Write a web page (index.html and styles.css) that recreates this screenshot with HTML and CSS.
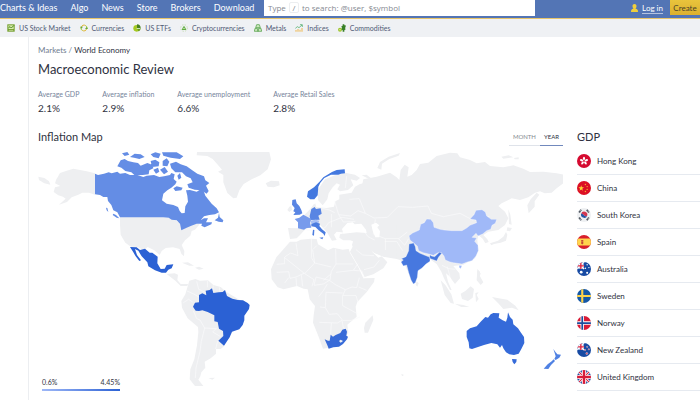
FILE: index.html
```html
<!DOCTYPE html>
<html lang="en">
<head>
<meta charset="utf-8">
<title>Macroeconomic Review</title>
<link rel="stylesheet" href="styles.css">
</head>
<body>
<header class="topbar">
  <nav class="mainnav">
    <a href="#">Charts &amp; Ideas</a><a href="#">Algo</a><a href="#">News</a><a href="#">Store</a><a href="#">Brokers</a><a href="#">Download</a>
  </nav>
  <div class="search">
    <input id="search" type="text">
    <label for="search">Type <kbd>/</kbd> to search: @user, $symbol</label>
  </div>
  <div class="account">
    <a class="login" href="#"><svg viewBox="0 0 14 16"><path fill="#f0cf3c" d="M7 0c3 0 4 2 4 4.500S9 9 9 9.500c4 .5 5 2 5 6.500H0c0-4.500 1-6 5-6.500C5 9 3 7 3 4.500S4 0 7 0z"/></svg><span>Log in</span></a>
    <button class="create" type="button">Create</button>
  </div>
</header>
<nav class="subnav">
  <a href="#"><svg viewBox="0 0 24 24"><path fill="#6f9d27" d="M1 1h22v22H1z"/><path fill="#d9ecac" d="M4 4h16v11H4z"/><path fill="none" stroke="#4a8a20" stroke-width="3" d="M4 12l5-4 4 4 8-8"/><path stroke="#e5efc6" stroke-width="2" d="M5 19h14"/></svg>US Stock Market</a>
  <a href="#"><svg viewBox="0 0 24 24"><g fill="none" stroke-width="3"><path stroke="#e2b637" d="M4 10c1-6 8-9 13-5M20 14c-1 6-8 9-13 5"/><path stroke="#a5c923" d="M17 5c4 2 5 6 3 10M7 19c-4-2-5-5-3-9"/></g><path fill="#62a63f" d="M0 8h9l-5 6zM15 15h9l-4-6z"/></svg>Currencies</a>
  <a href="#"><svg viewBox="0 0 24 24"><circle cx="11" cy="13" r="10" fill="#a5c923"/><path fill="#477f20" d="M12 1c7 0 11 5 11 11H12z"/><path fill="#6a9e20" d="M12 12h11c0 6-3 9-7 10z"/><path fill="#fff" d="M11 12h10v2H11z"/></svg>US ETFs</a>
  <a href="#"><svg viewBox="0 0 24 24"><circle cx="12" cy="12" r="10" fill="none" stroke="#b5d596" stroke-width="2" stroke-dasharray="4 4"/><path fill="#5fac3d" d="M12 5l4 6 3 7H5l3-7z"/><path stroke="#e9f4df" stroke-width="2" d="M9 13h6"/></svg>Cryptocurrencies</a>
  <a href="#"><svg viewBox="0 0 24 24"><g fill="#cce8bd" stroke="#45983a" stroke-width="2"><path d="M8 2h8l3 9H5zM3 13h7l2 9H1zM14 13h7l2 9H12z"/></g></svg>Metals</a>
  <a href="#"><svg viewBox="0 0 24 24"><path fill="#efc574" d="M1 18h4v5H1zm6-3h4v8H7zm6 2h4v6h-4zm6-5h4v11h-4z"/><path fill="none" stroke="#3da45b" stroke-width="2" d="M1 13l6-5 5 3 9-8M15 2h7v7"/></svg>Indices</a>
  <a href="#"><svg viewBox="0 0 24 24"><circle cx="6" cy="17" r="6" fill="#9fc52e"/><circle cx="6" cy="17" r="2" fill="#eef3c6"/><path fill="#367f27" d="M14 1h5v3h4v5l-2 3 2 4-4 3v4h-5v-4l-4-3 2-4-2-5 4-2z"/></svg>Commodities</a>
</nav>
<main class="page">
  <div class="crumbs"><a href="#">Markets</a><span>/</span><b>World Economy</b></div>
  <h1>Macroeconomic Review</h1>
  <dl class="stats">
    <div><dt>Average GDP</dt><dd>2.1%</dd></div>
    <div><dt>Average inflation</dt><dd>2.9%</dd></div>
    <div><dt>Average unemployment</dt><dd>6.6%</dd></div>
    <div><dt>Average Retail Sales</dt><dd>2.8%</dd></div>
  </dl>
  <div class="columns">
    <section>
      <div class="head"><h2>Inflation Map</h2>
        <div class="tabs"><button type="button">MONTH</button><button type="button" class="active">YEAR</button></div>
      </div>
      <div class="map">
        <svg viewBox="0 12 1575 720" role="img" aria-label="World inflation map">
          <g class="land">
            <g transform="translate(-24 -69)">
              <path d="M25 155l18 4 14 10 4 10-18-4-16-10zM82 158l8-14 20-7 20-6 40 8 25 6v64l-18-6-20 0-12 6-20 8-14 14-24 8 20-18-8-6-14-4-14-10 4-14 16-4-16-8 4-12z"/>
              <path d="M270 276h130l25 4 25 14 5 20 22-10 22-10 10 4-14 16-10 4-4 14-16 14-10 14 8 18-1 16-8-8-5-14-20-5-22 2-12 9-6 12-16-14-20-10-12 10-18-10-20-1-17-12-14-24-2-30z"/>
              <path d="M456 413l18-1 18 10-14 0zM495 428l12-3 14 6-14 3z"/>
            </g>
            <path d="M477 12h217l5 22-10 30-22 18-26 12-24 14-13 19-8 22-10 2-18-16-12-32 0-22-16-10 12-6-14-16-14-16-16-9-32-2zM683 106l16-8 24 2 2 12-18 6-18-2z"/>
            <g transform="translate(-24 336)">
              <path d="M410 42l24-2 10 4-2 16 10 12 22 0-2 6-20 0-16-16z"/>
              <path d="M478 62l18-5 14 5 24-1 16 14 22 6 16 14 50 30-5 60-50 60-1 14-10 8-14 0 0 14-16 14-18 10 2 18-12 14-3 12-6 10 15 19-25 0-16-20 2-30 12-30 8-42 4-40-1-15-31-26-17-32-2-20 12-20z"/>
              <path d="M535 354l20-1-8 6z"/>
              <path class="seam" d="M500 64l6 24 22 10M471 93l18 8 18 10M460 128l16-10 12 8M490 152l10 24 10 4M510 180l14 24 36 2M524 204l-10 40-4 30-12 50-2 30M558 206l-10 10 24 14M563 243l-6 24M532 62l0 20M550 76l-2 20M568 82l2 16"/>
            </g>
            <!-- Europe -->
            <g transform="translate(546 -24)">
              <path d="M208 200l6-2 2 12-8 6-6-6zM280 196l6-6 2 12-6 4z"/>
              <path d="M294 180L293 150 315 118 345 106 375 98 405 104 420 114 410 122 392 118 400 136 384 150 360 154 352 148 360 134 350 130 338 142 326 160 322 178 308 196z"/>
              <path d="M204 264L236 265 245 262 235 240 250 228 270 208 282 192 290 202 320 204 342 200 346 184 358 178 358 164 395 158 405 140 420 132 438 128 446 116 425 106 440 104 455 116 480 110 520 108 520 300 440 290 380 278 350 275 342 284 350 300 336 302 322 278 302 256 280 258 256 268 240 285 230 295 210 297z"/>
            </g>
            <!-- Russia and Asia -->
            <g transform="translate(996 -24)">
              <path d="M-20 118L20 110 60 98 80 112 88 120 92 90 104 74 116 82 112 110 125 105 140 90 150 72 175 68 200 48 240 38 262 40 270 52 300 60 320 70 345 66 360 78 400 82 430 76 460 86 480 96 520 95 560 100 580 104 580 130 560 145 545 158 524 160 510 154 495 158 475 172 450 180 425 175 395 190 385 198 405 215 415 235 405 255 385 270 355 275 340 285 352 298 356 306 346 310 338 296 325 285 322 300 325 330 315 355 280 374 250 378 268 400 270 415 255 432 246 420 240 410 228 400 234 425 245 450 240 450 222 415 214 395 200 372 180 358 150 378 135 400 130 420 118 405 105 375 90 360 80 357 40 350 15 340 -5 325 -60 300z"/>
              <path d="M500 158l8 6-14 20 0 16-18 20-4-24 10-18z"/>
              <path d="M22 84l8-18 26-16 34-11-4 8-28 10-22 14-2 18zM394 50l22-4 14 6-30 4zM432 54l14-2 0 6-12 0zM415 208l6 16 4 30-8-2zM412 262l14 2-6 10-10-2zM408 276l4 8-4 18-16 6-20 4-8 4-4-6 24-8 16-12zM140 424l6 6-4 10-5-6zM322 392l10 8-4 14-6-6z"/>
            </g>
            <g transform="translate(606 231)">
              <path d="M300 28L330 20 360 20 400 0 470 0 470 100 430 94 400 82 385 68 345 80 336 60 340 46 310 46 298 38z"/>
              <path d="M330 80L345 52 385 64 398 82 415 98 425 94 442 112 430 130 400 148 374 156 352 118z"/>
              <path d="M150 50l20 0 12-6 30-3 18 1 4 16 30 18 16-8 28 6 18-2 4 12 26 44 14 32 34-1-2 12-22 30-28 30-5 14 3 30-28 24 3 24-14 20-16 18-20 6-26 4-14-38-16-40 2-22 4-28-16-20-6-30-12-2-20-8-40 10-18-6-18-24-2-30 16-36z"/>
              <path d="M398 271l2 14-16 38-10 0-2-14 4-16z"/>
              <path class="seam" d="M110 118l24-2 0-20 18-12 22 8-6-38M134 98l60 48 30-32-10-16 0-56M230 62l-12 12 6 40 50 12M287 72l1 45 52 0M288 117l-14 22-4 26-20 12-28 4M288 142l52-6 14-20M110 142l36-2 4 20 18-4 26-12M146 158l-12 16M168 158l2 26M184 150l4 34M194 146l28 18-6 20M222 180l6-24 40 10 20 14 28 14 20-8 14 2 8-30M250 166l24-20M316 194l-8 18 0 30 44 24M308 212l40 0 6 20M236 215l14-18 12-20M240 246l16 2 2-46 50 2M256 248l12 20 24-2 16 20 26 0 26-10M238 292l54 2 14-8M274 294l-2 34M306 286l4 22 14 6M340 136l26 2 6 22M356 186l24 10M372 134l30-8 16-20M348 74l20 16 34 2"/>
            </g>
            <path class="seam" d="M790 220l16 26 32 2 24-10 10-14 40-16 36 6M890 160l12 40 36 4M850 180l24 6 16 8M880 198l0 40M902 200l14 22 36-2M938 204l22-16 22 8M934 154l30-2 18 44 26 14M926 84l-4 36M1008 210l40-2 32-32 44 2 46-4 10 22 36 10 50-10 38 20 30-10 20 0M1012 214l-6 44 36 14 40 0 26-20M1042 272l0 34M1082 272l18 20 12-20M1040 280l36 0 18 28M970 238l20 28 20 10M1212 352l20 10 20 2M1228 356l8 30"/>
            <path fill="#fff" d="M912 243l16-18 16-2 6 6 20-2 14 18 2 10-30-2-20 2-20 2zM1000 230l14-6 10 8-6 6 8 12-2 18-12 0-8-20z"/>
            <g transform="translate(1086 231)">
              <path d="M122 166l14 14 18 28 8 28-10-2-18-24zM164 236l26 4 18 6-24 0zM182 206l14-8 16-14 10 8-4 26-14 10-18-6zM226 204l10-2-6 8 6 12-8 10zM232 132l8 8 0 14 10 18-8 8-12-14zM276 216l20 4 26 4 24 18 10 14-20-8-26 4-14-16z"/>
              <path d="M424 300l4 2M4 446l8 4-6 4z"/>
            </g>
          </g>
          <g transform="translate(-24 -69)">
            <g fill="#648de5">
              <path d="M195 146L204 150 222 146 236 142 245 145 262 140 270 146 286 144 300 150 322 150 340 156 350 152 372 150 388 156 402 154 420 150 424 144 434 148 431 162 440 170 436 178 424 188 412 196 400 206 396 226 410 236 430 240 444 246 449 258 455 265 464 264 466 244 474 230 472 212 468 196 480 195 500 200 510 194 520 195 526 212 545 236 560 250 567 262 555 268 538 270 522 274 512 286 522 280 534 280 528 292 546 292 544 298 524 307 514 302 516 296 500 296 484 302 470 308 454 316 450 296 440 286 425 284 416 278 400 277 270 277 262 262 250 256 244 240 234 228 232 216 220 216 210 210 195 208z"/>
              <path d="M262 124l10-18 12-4 10 6 16 4 14 2 8 8 20-8 16 6 2 10-12 6-2 12-18 2-24 1-10-9-18-4-12-10zM276 85l16-4 6 8-14 4zM300 96l14-10 18 2 12 8-16 6-16-4zM362 88l14-6 16 4-6 14-16-4zM396 82l44 0 20 12-10 8-28-4-22-6zM362 108l14-4 12 8-2 12-20 2zM398 108l12-8 8 10-6 14-14-2zM370 134l14-6 4 12-10 6zM390 134l14-8 10 14-12 8zM300 156l16 0 20 6-10 4-20-4z"/>
              <path d="M420 116l18-6 14 8 18 6 20 14 12 8 20 8 4 12 12 8-10 8 8 16-6 8-16-10-20-2-18-6-4-10 16-6-6-12-14-6-12-12-20 0-12-12zM442 152l8-8 4 14-8 6zM430 190l10-6 18 4-4 8-18 2zM567 264l2 12 11 10-2 6-12-2-12-4 10-8zM250 266l8 4 10 10-8-2-12-8zM228 248l4 1 3 12-5-5z"/>
            </g>
            <path fill="#2b61d4" d="M300 366l20 1 10 8 15-4 14 12 8 0 8 6 8 6-1 20 10 17 12-1 6-11 20-2-5 12-10 4-7 9-13 0-20-7-20-12-3-12-17-18-10-17-10-5 6 18 12 16-5 2-11-14-7-12z"/>
          </g>
          <path transform="translate(-24 336)" fill="#2b61d4" d="M507 105l10-5 12 6-2-14 12-2 7-5 4 14 16-2 12-1 7-6 6 18 16 8 16 4 16 1 14 8 6 6-2 12-14 20 0 14-5 14-10 13-22 7-7 17-8 12-9 13-17-15 15-14-1-15-12-7-4-20-10-2 0-18-20-10-16-5-10 2-10-1-8-12 6-12 12-1z"/>
          <g transform="translate(546 -24)">
            <path fill="#4378df" d="M264 154l18-12 18-18 10-12 26-16 14-6 24-2 1 12-12 1-8 3-12 0-10 0-20 10-12 14-6 12-2 26-10 12-12 0-10-8z"/>
            <path fill="#5985e3" d="M217 180l10-2 3 12 8 8 6 12 3 10-8 4-19 1 6-8-6-3 4-10-8-10zM274 207l10-6 4 6 14-2 3 16-10 6 4 12-28 1-2-12z"/>
            <path fill="#779bec" d="M224 237l14-4 12-9 14 8 10 5-4 12 4 14-14 1-8 5-18-4 0-18z"/>
            <path fill="#a8c0f4" d="M272 242l14-3 12 3-2 6-12 4-10-1z"/>
            <path fill="#4b7cdf" d="M274 252l14-5 12 4-2 7 8 10 11 9-3 11-4-7-14-10-10-10-12-2zM279 269l4 1-1 17-5-2zM298 293l12-1-3 6z"/>
          </g>
          <g transform="translate(996 -24)">
            <path fill="#a0b9f8" stroke="#fff" d="M117 287L128 279 148 270 152 253 163 248 170 237 182 238 190 248 192 262 210 268 222 270 246 272 276 272 290 264 300 256 320 248 318 240 300 237 312 224 318 211 336 209 346 216 350 228 364 238 380 238 376 250 366 256 362 268 350 272 338 282 324 288 318 280 306 292 320 294 314 304 324 316 325 332 318 348 306 362 292 366 276 372 262 370 250 368 240 366 226 360 222 348 214 338 204 338 190 346 176 342 160 338 146 332 142 318 130 308 120 300zM268 376l8 1-4 9-5-4z"/>
            <path fill="#4778df" stroke="#fff" d="M117 312L131 309 136 320 138 332 150 340 180 352 180 364 168 372 156 384 144 392 142 412 136 428 130 432 123 420 116 398 110 375 100 378 93 366 100 360 94 356 108 350 116 332zM180 344l4 4 10 2 14-13 8 2-10 12-6 12-10-4-12-4z"/>
          </g>
          <path transform="translate(606 231)" fill="#386bd8" d="M254 343l10 4 5 0 3-18 7 6 8-5 14-6 6-10 10-3 4 9-2 12 5 3-3 8-12 14-12 8-17 2-14 4-3-8zM302 344l-5 4 5 5 7-5z" fill-rule="evenodd"/>
          <g transform="translate(1086 231)">
            <path fill="#356ad9" d="M200 318L210 310 230 304 242 290 256 276 264 278 272 268 280 264 298 265 296 278 308 286 318 290 322 278 324 262 330 276 338 284 340 298 354 310 362 322 372 336 373 354 364 372 356 386 342 390 328 388 318 382 310 370 306 360 300 368 292 358 274 354 252 360 234 366 216 372 208 370 206 352 200 336z"/>
            <path fill="#356ad9" d="M336 402l14 1-1 8-6 7-5-7z"/>
            <path fill="#4f81e3" d="M460 372l7 10 5 6 11 1-5 9-11 7-4-3 4-8-3-10zM461 403l4 5-12 12-8 12-14-1 12-13 12-9z"/>
          </g>
        </svg>
        <div class="legend"><span>0.6%</span><span>4.45%</span></div>
      </div>
    </section>
    <section class="gdp">
      <div class="head"><h2>GDP</h2></div>
      <ul>
        <li><svg viewBox="0 0 40 40"><circle cx="20" cy="20" r="20" fill="#d50a30"/><g fill="#fff"><ellipse id="petal" cx="20" cy="13" rx="3" ry="5"/><use href="#petal" transform="rotate(72 20 20)"/><use href="#petal" transform="rotate(144 20 20)"/><use href="#petal" transform="rotate(216 20 20)"/><use href="#petal" transform="rotate(288 20 20)"/></g></svg><a href="#">Hong Kong</a></li>
        <li><svg viewBox="0 0 40 40"><circle cx="20" cy="20" r="20" fill="#dc1024"/><path fill="#fcd836" d="M12 12l2 6h6l-5 4 2 6-5-4-5 4 2-6-5-4h6z"/><g fill="#f3a92f"><circle cx="24" cy="10" r="2"/><circle cx="29" cy="16" r="2"/><circle cx="29" cy="24" r="2"/><circle cx="24" cy="30" r="2"/></g></svg><a href="#">China</a></li>
        <li><svg viewBox="0 0 40 40"><circle cx="20" cy="20" r="20" fill="#eef0f2"/><path fill="#d43650" d="M12 16a9 9 0 0 1 17 6q-5 4-9-1t-8-5z"/><path fill="#2555a5" d="M12 16a9 9 0 0 0 17 6q-5 4-9-1t-8-5z"/><path stroke="#555b65" stroke-width="5" stroke-dasharray="6 1" d="M6 13l6-8M28 5l6 8M6 27l6 8M28 35l6-8"/></svg><a href="#">South Korea</a></li>
        <li><svg viewBox="0 0 40 40"><g clip-path="url(#round)"><path fill="#d81f2c" d="M0 0h40v40H0z"/><path fill="#ffd54d" d="M0 10h40v20H0z"/><path fill="#c54a35" d="M12 14h6v3h-6zM12 18h6v7l-3 2-3-2z"/></g></svg><a href="#">Spain</a></li>
        <li><svg viewBox="0 0 40 40"><g id="ensign" clip-path="url(#round)"><path fill="#174aa3" d="M0 0h40v40H0z"/><path stroke="#fff" stroke-width="5" d="M0 0l20 20M20 0L0 20"/><path stroke="#fff" stroke-width="8" d="M11 0v20M0 11h20"/><path stroke="#db2742" stroke-width="4" d="M11 0v20M0 11h20"/></g><g fill="#fff"><circle cx="12" cy="29" r="4"/><circle cx="29" cy="8" r="2"/><circle cx="24" cy="18" r="2"/><circle cx="34" cy="16" r="2"/><circle cx="29" cy="31" r="3"/></g></svg><a href="#">Australia</a></li>
        <li><svg viewBox="0 0 40 40"><g clip-path="url(#round)"><path fill="#1558a7" d="M0 0h40v40H0z"/><path stroke="#ffd34b" stroke-width="6" d="M15 0v40M0 20h40"/></g></svg><a href="#">Sweden</a></li>
        <li><svg viewBox="0 0 40 40"><g clip-path="url(#round)"><path fill="#d91b36" d="M0 0h40v40H0z"/><path stroke="#fff" stroke-width="10" d="M15 0v40M0 20h40"/><path stroke="#1b4d9c" stroke-width="5" d="M15 0v40M0 20h40"/></g></svg><a href="#">Norway</a></li>
        <li><svg viewBox="0 0 40 40"><use href="#ensign"/><g fill="#e05266" stroke="#fff"><circle cx="29" cy="11" r="2"/><circle cx="23" cy="20" r="2"/><circle cx="34" cy="18" r="2"/><circle cx="28" cy="30" r="3"/></g></svg><a href="#">New Zealand</a></li>
        <li><svg viewBox="0 0 40 40"><defs><clipPath id="round"><circle cx="20" cy="20" r="20"/></clipPath></defs><g clip-path="url(#round)"><path fill="#234f9f" d="M0 0h40v40H0z"/><path stroke="#fff" stroke-width="8" d="M0 0l40 40M40 0L0 40"/><path stroke="#d81c38" stroke-width="3" d="M0 0l40 40M40 0L0 40"/><path stroke="#fff" stroke-width="12" d="M20 0v40M0 20h40"/><path stroke="#d81c38" stroke-width="7" d="M20 0v40M0 20h40"/></g></svg><a href="#">United Kingdom</a></li>
      </ul>
    </section>
  </div>
</main>
</body>
</html>
```
FILE: styles.css
```css
* { box-sizing: border-box; }
body { margin: 0; background: #fff; color: #2f3241; font: 8px/12px "Trebuchet MS", Lato, sans-serif; overflow: hidden; }
a { color: inherit; text-decoration: none; }
button, input { font: inherit; margin: 0; border: 0; padding: 0; border-radius: 0; }
h1, h2, dl, dd, ul { margin: 0; padding: 0; font-weight: 400; }
h1 { font-size: 13px; line-height: 18px; margin-top: 4px; }
h2 { font-size: 11px; line-height: 16px; }
.topbar { display: flex; align-items: stretch; height: 19px; background: #5375b5; border-bottom: 1px solid #e7c46b; color: #fff; }
.mainnav { display: flex; gap: 13px; width: 264px; flex: none; font-size: 9px; line-height: 16px; white-space: nowrap; }
.search { position: relative; flex: 0 1 271px; height: 16px; }
.search input { display: block; width: 100%; height: 16px; background: #fff; }
.search label { position: absolute; left: 4px; top: 0; font-family: "Trebuchet MS", "Open Sans", sans-serif; line-height: 16px; color: #858991; white-space: nowrap; }
kbd { display: inline-block; width: 10px; height: 11px; margin: 0 1px; border: 1px solid #eceef0; border-radius: 2px; font: inherit; line-height: 9px; text-align: center; }
.account { display: flex; align-items: flex-start; gap: 7px; margin-left: auto; }
.login { display: flex; align-items: center; gap: 4px; height: 16px; }
.login svg { width: 7px; height: 8px; }
.login span { line-height: 10px; border-bottom: 1px solid #b4c3e0; }
.create { width: 30px; height: 15px; background: linear-gradient(#e9c43c, #dcb02f); color: #4b4328; }
.subnav { display: flex; align-items: center; gap: 9px; height: 18px; padding-left: 7px; background: #eff1f4; color: #4f5a75; font-size: 7px; white-space: nowrap; }
.subnav a { display: flex; align-items: center; gap: 4px; }
.subnav svg { width: 8px; height: 8px; }
.page { margin-left: 28px; padding: 7px 0 0 9px; border-left: 1px solid #eceef1; min-height: calc(100vh - 37px); }
.crumbs { display: flex; gap: 2px; color: #717e91; }
.crumbs b { font-weight: 400; color: #2f3241; }
.stats { display: flex; gap: 23px; margin-top: 10px; }
.stats dt { font-size: 7px; line-height: 12px; color: #76849b; }
.stats dd { font-size: 10px; line-height: 16px; }
.columns { display: grid; grid-template-columns: minmax(0, 525fr) minmax(0, 123fr); gap: 14px; margin-top: 13px; }
.head { display: flex; justify-content: space-between; height: 17px; }
.tabs { display: flex; }
.tabs button { padding: 0 4px; background: none; border-bottom: 1px solid #dfe3ea; color: #858991; font-size: 6px; line-height: 16px; }
.tabs .active { border-color: #7189bd; color: #2f3241; }
.map { position: relative; margin-top: 6px; }
.map > svg { display: block; width: 100%; height: auto; }
.land { fill: #eeeff1; }
.seam { fill: none; stroke: #fafbfc; stroke-width: 2; }
.legend { position: absolute; left: 4px; bottom: 1px; width: 78px; display: flex; justify-content: space-between; font-size: 7px; line-height: 10px; padding-bottom: 2px; border-bottom: 2px solid; border-image: linear-gradient(90deg, #a0b9f8, #2b61d4) 1; }
.gdp ul { list-style: none; margin-top: 2px; }
.gdp li { display: flex; align-items: center; gap: 6px; height: 27px; border-bottom: 1px solid #e6eaf0; }
.gdp li svg { width: 14px; height: 14px; }
```
